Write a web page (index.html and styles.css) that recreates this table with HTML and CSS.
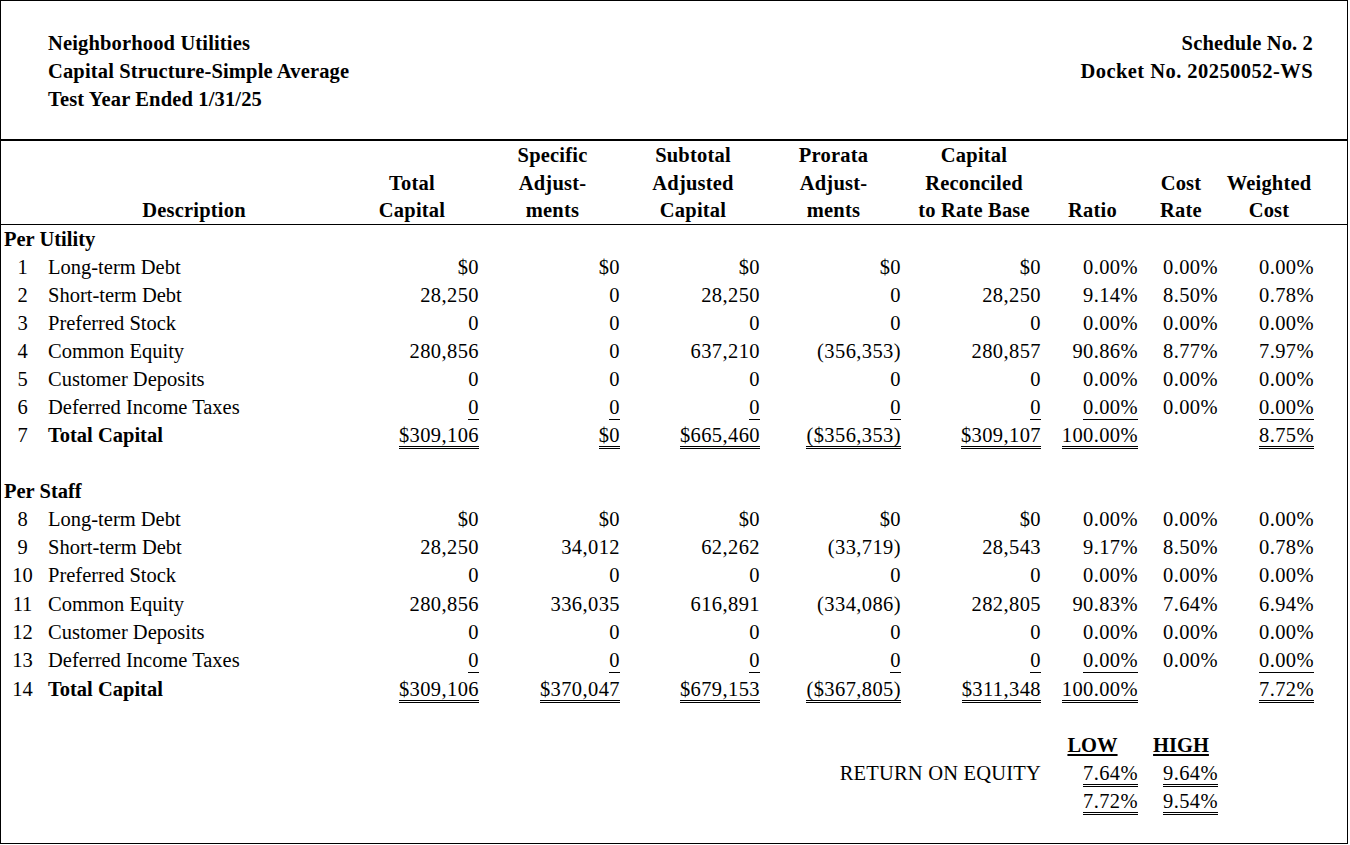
FILE: index.html
```html
<!DOCTYPE html>
<html>
<head>
<meta charset="utf-8">
<title>Capital Structure-Simple Average</title>
<link rel="stylesheet" href="styles.css">
</head>
<body>
<div class="page">
  <div class="top">
    <div class="top-left">
      <div>Neighborhood Utilities</div>
      <div>Capital Structure-Simple Average</div>
      <div>Test Year Ended 1/31/25</div>
    </div>
    <div class="top-right">
      <div>Schedule No. 2</div>
      <div class="docket">Docket No. 20250052-WS</div>
    </div>
  </div>
  <table class="sched">
    <colgroup>
      <col class="c-no"><col class="c-desc"><col class="c-num"><col class="c-num2"><col class="c-num"><col class="c-num2"><col class="c-num"><col class="c-ratio"><col class="c-rate"><col class="c-wc"><col class="c-pad">
    </colgroup>
    <thead>
      <tr><th></th><th></th><th></th><th>Specific</th><th>Subtotal</th><th>Prorata</th><th>Capital</th><th></th><th></th><th></th><th></th></tr>
      <tr><th></th><th></th><th>Total</th><th>Adjust-</th><th>Adjusted</th><th>Adjust-</th><th>Reconciled</th><th></th><th>Cost</th><th>Weighted</th><th></th></tr>
      <tr class="hlast"><th></th><th>Description</th><th>Capital</th><th>ments</th><th>Capital</th><th>ments</th><th>to Rate Base</th><th>Ratio</th><th>Rate</th><th>Cost</th><th></th></tr>
    </thead>
    <tbody>
      <tr><td colspan="2" class="sect">Per Utility</td><td colspan="9"></td></tr>
      <tr><td class="no">1</td><td class="desc">Long-term Debt</td><td class="n">$0</td><td class="n">$0</td><td class="n">$0</td><td class="n">$0</td><td class="n">$0</td><td class="n">0.00%</td><td class="n">0.00%</td><td class="n">0.00%</td><td></td></tr>
      <tr><td class="no">2</td><td class="desc">Short-term Debt</td><td class="n">28,250</td><td class="n">0</td><td class="n">28,250</td><td class="n">0</td><td class="n">28,250</td><td class="n">9.14%</td><td class="n">8.50%</td><td class="n">0.78%</td><td></td></tr>
      <tr><td class="no">3</td><td class="desc">Preferred Stock</td><td class="n">0</td><td class="n">0</td><td class="n">0</td><td class="n">0</td><td class="n">0</td><td class="n">0.00%</td><td class="n">0.00%</td><td class="n">0.00%</td><td></td></tr>
      <tr><td class="no">4</td><td class="desc">Common Equity</td><td class="n">280,856</td><td class="n">0</td><td class="n">637,210</td><td class="n">(356,353)</td><td class="n">280,857</td><td class="n">90.86%</td><td class="n">8.77%</td><td class="n">7.97%</td><td></td></tr>
      <tr><td class="no">5</td><td class="desc">Customer Deposits</td><td class="n">0</td><td class="n">0</td><td class="n">0</td><td class="n">0</td><td class="n">0</td><td class="n">0.00%</td><td class="n">0.00%</td><td class="n">0.00%</td><td></td></tr>
      <tr><td class="no">6</td><td class="desc">Deferred Income Taxes</td><td class="n"><span class="u1">0</span></td><td class="n"><span class="u1">0</span></td><td class="n"><span class="u1">0</span></td><td class="n"><span class="u1">0</span></td><td class="n"><span class="u1">0</span></td><td class="n"><span class="u1">0.00%</span></td><td class="n">0.00%</td><td class="n"><span class="u1">0.00%</span></td><td></td></tr>
      <tr><td class="no">7</td><td class="desc b">Total Capital</td><td class="n"><span class="u2">$309,106</span></td><td class="n"><span class="u2">$0</span></td><td class="n"><span class="u2">$665,460</span></td><td class="n"><span class="u2">($356,353)</span></td><td class="n"><span class="u2">$309,107</span></td><td class="n"><span class="u2">100.00%</span></td><td class="n"></td><td class="n"><span class="u2">8.75%</span></td><td></td></tr>
      <tr><td colspan="11"></td></tr>
      <tr><td colspan="2" class="sect">Per Staff</td><td colspan="9"></td></tr>
      <tr><td class="no">8</td><td class="desc">Long-term Debt</td><td class="n">$0</td><td class="n">$0</td><td class="n">$0</td><td class="n">$0</td><td class="n">$0</td><td class="n">0.00%</td><td class="n">0.00%</td><td class="n">0.00%</td><td></td></tr>
      <tr><td class="no">9</td><td class="desc">Short-term Debt</td><td class="n">28,250</td><td class="n">34,012</td><td class="n">62,262</td><td class="n">(33,719)</td><td class="n">28,543</td><td class="n">9.17%</td><td class="n">8.50%</td><td class="n">0.78%</td><td></td></tr>
      <tr><td class="no">10</td><td class="desc">Preferred Stock</td><td class="n">0</td><td class="n">0</td><td class="n">0</td><td class="n">0</td><td class="n">0</td><td class="n">0.00%</td><td class="n">0.00%</td><td class="n">0.00%</td><td></td></tr>
      <tr class="tall"><td class="no">11</td><td class="desc">Common Equity</td><td class="n">280,856</td><td class="n">336,035</td><td class="n">616,891</td><td class="n">(334,086)</td><td class="n">282,805</td><td class="n">90.83%</td><td class="n">7.64%</td><td class="n">6.94%</td><td></td></tr>
      <tr><td class="no">12</td><td class="desc">Customer Deposits</td><td class="n">0</td><td class="n">0</td><td class="n">0</td><td class="n">0</td><td class="n">0</td><td class="n">0.00%</td><td class="n">0.00%</td><td class="n">0.00%</td><td></td></tr>
      <tr><td class="no">13</td><td class="desc">Deferred Income Taxes</td><td class="n"><span class="u1">0</span></td><td class="n"><span class="u1">0</span></td><td class="n"><span class="u1">0</span></td><td class="n"><span class="u1">0</span></td><td class="n"><span class="u1">0</span></td><td class="n"><span class="u1">0.00%</span></td><td class="n">0.00%</td><td class="n"><span class="u1">0.00%</span></td><td></td></tr>
      <tr class="tall"><td class="no">14</td><td class="desc b">Total Capital</td><td class="n"><span class="u2">$309,106</span></td><td class="n"><span class="u2">$370,047</span></td><td class="n"><span class="u2">$679,153</span></td><td class="n"><span class="u2">($367,805)</span></td><td class="n"><span class="u2">$311,348</span></td><td class="n"><span class="u2">100.00%</span></td><td class="n"></td><td class="n"><span class="u2">7.72%</span></td><td></td></tr>
      <tr><td colspan="11"></td></tr>
      <tr><td colspan="7"></td><td class="c"><span class="uh">LOW</span></td><td class="c"><span class="uh">HIGH</span></td><td colspan="2"></td></tr>
      <tr><td colspan="5"></td><td colspan="2" class="n roe">RETURN ON EQUITY</td><td class="n"><span class="u2">7.64%</span></td><td class="n"><span class="u2">9.64%</span></td><td colspan="2"></td></tr>
      <tr><td colspan="7"></td><td class="n"><span class="u2">7.72%</span></td><td class="n"><span class="u2">9.54%</span></td><td colspan="2"></td></tr>
    </tbody>
  </table>
</div>
</body>
</html>
```

FILE: styles.css
```css
html, body {
  margin: 0;
  padding: 0;
  background: #fff;
}
body {
  font-family: "Liberation Serif", "Times New Roman", serif;
  font-size: 20.5px;
  color: #000;
}
.page {
  box-sizing: border-box;
  width: 1348px;
  height: 844px;
  border: 1px solid #000;
  overflow: hidden;
}
.top {
  display: flex;
  justify-content: space-between;
  padding: 28px 34px 26px 47px;
  border-bottom: 2px solid #000;
  font-weight: bold;
  line-height: 28px;
  letter-spacing: 0.15px;
}
.top-right {
  text-align: right;
}
.top-right .docket {
  letter-spacing: 0.45px;
}
.sched {
  table-layout: fixed;
  border-collapse: separate;
  border-spacing: 0;
  width: 1346px;
}
.c-no { width: 45px; }
.c-desc { width: 296px; }
.c-num { width: 140px; }
.c-num2 { width: 141px; }
.c-ratio { width: 97px; }
.c-rate { width: 80px; }
.c-wc { width: 96px; }
.c-pad { width: 30px; }
.sched th, .sched td {
  padding: 0 3px;
  line-height: 28px;
  height: 28px;
  white-space: nowrap;
  vertical-align: middle;
}
.sched th {
  font-weight: bold;
  text-align: center;
  padding: 0;
  letter-spacing: 0.2px;
}
.sched tr.hlast th {
  height: 28px;
  line-height: 27px;
  border-bottom: 1px solid #000;
  box-sizing: border-box;
}
.sched tr.tall td {
  height: 29px;
}
.sect {
  font-weight: bold;
  text-align: left;
}
.sched td.no {
  text-align: center;
  padding: 0 2px 0 0;
}
.sched td.desc {
  padding-left: 2px;
}
.b {
  font-weight: bold;
}
.n {
  text-align: right;
  letter-spacing: 0.4px;
}
.sched td.roe {
  letter-spacing: 0.2px;
}
.c {
  text-align: center;
  font-weight: bold;
}
.u1 {
  display: inline-block;
  line-height: 24px;
  border-bottom: 1px solid #000;
}
.u2 {
  display: inline-block;
  line-height: 22px;
  border-bottom: 3px double #000;
}
.uh {
  text-decoration: underline;
  text-decoration-thickness: 2px;
  text-underline-offset: 2px;
}
```
